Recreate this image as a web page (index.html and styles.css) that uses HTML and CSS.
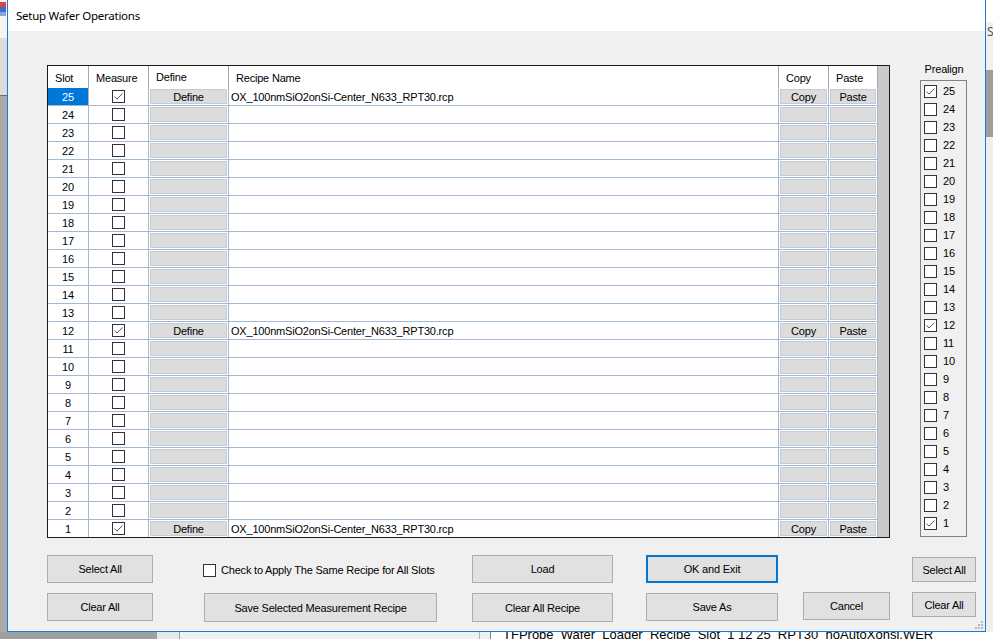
FILE: index.html
```html
<!DOCTYPE html>
<html>
<head>
<meta charset="utf-8">
<title>Setup Wafer Operations</title>
<link rel="stylesheet" href="styles.css">
</head>
<body>
<div class="backdrop">
  <div class="bg-left"><span class="bg-icon"></span></div>
  <div class="bg-right"><span class="bg-s">S</span></div>
  <div class="bg-bottom"><div class="bg-file">TFProbe_Wafer_Loader_Recipe_Slot_1 12 25_RPT30_noAutoXonsi.WER</div></div>
</div>
<div class="dialog">
  <div class="titlebar">Setup Wafer Operations</div>
  <div class="client">
    <div class="main">
      <div class="grid">
        <div class="row head"><div>Slot</div><div>Measure</div><div class="hdef">Define</div><div>Recipe Name</div><div>Copy</div><div>Paste</div></div>
        <div class="row"><div class="slot sel">25</div><div class="mid"><span class="cb"><svg viewBox="0 0 11 11"><path d="M1.5 5.5 L4 8 L9.5 2.5"/></svg></span></div><div class="bc"><span class="gbtn">Define</span></div><div class="name">OX_100nmSiO2onSi-Center_N633_RPT30.rcp</div><div class="bc"><span class="gbtn">Copy</span></div><div class="bc"><span class="gbtn">Paste</span></div></div>
        <div class="row"><div class="slot">24</div><div class="mid"><span class="cb"></span></div><div class="bc"><span class="gbtn"></span></div><div class="name"></div><div class="bc"><span class="gbtn"></span></div><div class="bc"><span class="gbtn"></span></div></div>
        <div class="row"><div class="slot">23</div><div class="mid"><span class="cb"></span></div><div class="bc"><span class="gbtn"></span></div><div class="name"></div><div class="bc"><span class="gbtn"></span></div><div class="bc"><span class="gbtn"></span></div></div>
        <div class="row"><div class="slot">22</div><div class="mid"><span class="cb"></span></div><div class="bc"><span class="gbtn"></span></div><div class="name"></div><div class="bc"><span class="gbtn"></span></div><div class="bc"><span class="gbtn"></span></div></div>
        <div class="row"><div class="slot">21</div><div class="mid"><span class="cb"></span></div><div class="bc"><span class="gbtn"></span></div><div class="name"></div><div class="bc"><span class="gbtn"></span></div><div class="bc"><span class="gbtn"></span></div></div>
        <div class="row"><div class="slot">20</div><div class="mid"><span class="cb"></span></div><div class="bc"><span class="gbtn"></span></div><div class="name"></div><div class="bc"><span class="gbtn"></span></div><div class="bc"><span class="gbtn"></span></div></div>
        <div class="row"><div class="slot">19</div><div class="mid"><span class="cb"></span></div><div class="bc"><span class="gbtn"></span></div><div class="name"></div><div class="bc"><span class="gbtn"></span></div><div class="bc"><span class="gbtn"></span></div></div>
        <div class="row"><div class="slot">18</div><div class="mid"><span class="cb"></span></div><div class="bc"><span class="gbtn"></span></div><div class="name"></div><div class="bc"><span class="gbtn"></span></div><div class="bc"><span class="gbtn"></span></div></div>
        <div class="row"><div class="slot">17</div><div class="mid"><span class="cb"></span></div><div class="bc"><span class="gbtn"></span></div><div class="name"></div><div class="bc"><span class="gbtn"></span></div><div class="bc"><span class="gbtn"></span></div></div>
        <div class="row"><div class="slot">16</div><div class="mid"><span class="cb"></span></div><div class="bc"><span class="gbtn"></span></div><div class="name"></div><div class="bc"><span class="gbtn"></span></div><div class="bc"><span class="gbtn"></span></div></div>
        <div class="row"><div class="slot">15</div><div class="mid"><span class="cb"></span></div><div class="bc"><span class="gbtn"></span></div><div class="name"></div><div class="bc"><span class="gbtn"></span></div><div class="bc"><span class="gbtn"></span></div></div>
        <div class="row"><div class="slot">14</div><div class="mid"><span class="cb"></span></div><div class="bc"><span class="gbtn"></span></div><div class="name"></div><div class="bc"><span class="gbtn"></span></div><div class="bc"><span class="gbtn"></span></div></div>
        <div class="row"><div class="slot">13</div><div class="mid"><span class="cb"></span></div><div class="bc"><span class="gbtn"></span></div><div class="name"></div><div class="bc"><span class="gbtn"></span></div><div class="bc"><span class="gbtn"></span></div></div>
        <div class="row"><div class="slot">12</div><div class="mid"><span class="cb"><svg viewBox="0 0 11 11"><path d="M1.5 5.5 L4 8 L9.5 2.5"/></svg></span></div><div class="bc"><span class="gbtn">Define</span></div><div class="name">OX_100nmSiO2onSi-Center_N633_RPT30.rcp</div><div class="bc"><span class="gbtn">Copy</span></div><div class="bc"><span class="gbtn">Paste</span></div></div>
        <div class="row"><div class="slot">11</div><div class="mid"><span class="cb"></span></div><div class="bc"><span class="gbtn"></span></div><div class="name"></div><div class="bc"><span class="gbtn"></span></div><div class="bc"><span class="gbtn"></span></div></div>
        <div class="row"><div class="slot">10</div><div class="mid"><span class="cb"></span></div><div class="bc"><span class="gbtn"></span></div><div class="name"></div><div class="bc"><span class="gbtn"></span></div><div class="bc"><span class="gbtn"></span></div></div>
        <div class="row"><div class="slot">9</div><div class="mid"><span class="cb"></span></div><div class="bc"><span class="gbtn"></span></div><div class="name"></div><div class="bc"><span class="gbtn"></span></div><div class="bc"><span class="gbtn"></span></div></div>
        <div class="row"><div class="slot">8</div><div class="mid"><span class="cb"></span></div><div class="bc"><span class="gbtn"></span></div><div class="name"></div><div class="bc"><span class="gbtn"></span></div><div class="bc"><span class="gbtn"></span></div></div>
        <div class="row"><div class="slot">7</div><div class="mid"><span class="cb"></span></div><div class="bc"><span class="gbtn"></span></div><div class="name"></div><div class="bc"><span class="gbtn"></span></div><div class="bc"><span class="gbtn"></span></div></div>
        <div class="row"><div class="slot">6</div><div class="mid"><span class="cb"></span></div><div class="bc"><span class="gbtn"></span></div><div class="name"></div><div class="bc"><span class="gbtn"></span></div><div class="bc"><span class="gbtn"></span></div></div>
        <div class="row"><div class="slot">5</div><div class="mid"><span class="cb"></span></div><div class="bc"><span class="gbtn"></span></div><div class="name"></div><div class="bc"><span class="gbtn"></span></div><div class="bc"><span class="gbtn"></span></div></div>
        <div class="row"><div class="slot">4</div><div class="mid"><span class="cb"></span></div><div class="bc"><span class="gbtn"></span></div><div class="name"></div><div class="bc"><span class="gbtn"></span></div><div class="bc"><span class="gbtn"></span></div></div>
        <div class="row"><div class="slot">3</div><div class="mid"><span class="cb"></span></div><div class="bc"><span class="gbtn"></span></div><div class="name"></div><div class="bc"><span class="gbtn"></span></div><div class="bc"><span class="gbtn"></span></div></div>
        <div class="row"><div class="slot">2</div><div class="mid"><span class="cb"></span></div><div class="bc"><span class="gbtn"></span></div><div class="name"></div><div class="bc"><span class="gbtn"></span></div><div class="bc"><span class="gbtn"></span></div></div>
        <div class="row"><div class="slot">1</div><div class="mid"><span class="cb"><svg viewBox="0 0 11 11"><path d="M1.5 5.5 L4 8 L9.5 2.5"/></svg></span></div><div class="bc"><span class="gbtn">Define</span></div><div class="name">OX_100nmSiO2onSi-Center_N633_RPT30.rcp</div><div class="bc"><span class="gbtn">Copy</span></div><div class="bc"><span class="gbtn">Paste</span></div></div>
      </div>
      <div class="actions">
        <div class="col c1">
          <span class="btn">Select All</span>
          <span class="btn">Clear All</span>
        </div>
        <div class="col c2">
          <label class="check-row"><span class="cb"></span>Check to Apply The Same Recipe for All Slots</label>
          <span class="btn">Save Selected Measurement Recipe</span>
        </div>
        <div class="col c3">
          <span class="btn">Load</span>
          <span class="btn">Clear All Recipe</span>
        </div>
        <div class="col c4">
          <span class="btn default">OK and Exit</span>
          <span class="btn">Save As</span>
        </div>
        <div class="col c5">
          <span class="spacer"></span>
          <span class="btn">Cancel</span>
        </div>
      </div>
    </div>
    <div class="side">
      <div class="pre-label">Prealign</div>
      <div class="pre-box">
        <div class="pre-item"><span class="cb"><svg viewBox="0 0 11 11"><path d="M1.5 5.5 L4 8 L9.5 2.5"/></svg></span>25</div>
        <div class="pre-item"><span class="cb"></span>24</div>
        <div class="pre-item"><span class="cb"></span>23</div>
        <div class="pre-item"><span class="cb"></span>22</div>
        <div class="pre-item"><span class="cb"></span>21</div>
        <div class="pre-item"><span class="cb"></span>20</div>
        <div class="pre-item"><span class="cb"></span>19</div>
        <div class="pre-item"><span class="cb"></span>18</div>
        <div class="pre-item"><span class="cb"></span>17</div>
        <div class="pre-item"><span class="cb"></span>16</div>
        <div class="pre-item"><span class="cb"></span>15</div>
        <div class="pre-item"><span class="cb"></span>14</div>
        <div class="pre-item"><span class="cb"></span>13</div>
        <div class="pre-item"><span class="cb"><svg viewBox="0 0 11 11"><path d="M1.5 5.5 L4 8 L9.5 2.5"/></svg></span>12</div>
        <div class="pre-item"><span class="cb"></span>11</div>
        <div class="pre-item"><span class="cb"></span>10</div>
        <div class="pre-item"><span class="cb"></span>9</div>
        <div class="pre-item"><span class="cb"></span>8</div>
        <div class="pre-item"><span class="cb"></span>7</div>
        <div class="pre-item"><span class="cb"></span>6</div>
        <div class="pre-item"><span class="cb"></span>5</div>
        <div class="pre-item"><span class="cb"></span>4</div>
        <div class="pre-item"><span class="cb"></span>3</div>
        <div class="pre-item"><span class="cb"></span>2</div>
        <div class="pre-item"><span class="cb"><svg viewBox="0 0 11 11"><path d="M1.5 5.5 L4 8 L9.5 2.5"/></svg></span>1</div>
      </div>
      <span class="btn side-sel">Select All</span>
      <span class="btn side-clr">Clear All</span>
    </div>
  </div>
  <span class="grip"><svg viewBox="0 0 9 9"><rect x="7" y="1" width="2" height="2"/><rect x="4" y="4" width="2" height="2"/><rect x="7" y="4" width="2" height="2"/><rect x="1" y="7" width="2" height="2"/><rect x="4" y="7" width="2" height="2"/><rect x="7" y="7" width="2" height="2"/></svg></span>
</div>
</body>
</html>
```

FILE: styles.css
```css
* { box-sizing: border-box; }
html, body { margin: 0; padding: 0; }
body {
  width: 993px;
  height: 639px;
  overflow: hidden;
  position: relative;
  background: #f0f0f0;
  font-family: "Liberation Sans", Arial, sans-serif;
  font-size: 11px;
  letter-spacing: -0.2px;
  color: #000;
}

/* windows behind the dialog */
.backdrop { position: absolute; left: 0; top: 0; width: 993px; height: 639px; }
.bg-left {
  position: absolute; left: 0; top: 0; width: 7px; height: 639px;
  background: linear-gradient(to bottom, #f4f4f4 0, #f4f4f4 38px, #dcdcdc 38px, #dcdcdc 95px, #6e6e6e 95px, #6e6e6e 96px, #a9a9a9 96px);
}
.bg-icon {
  display: block; width: 6px; height: 14px; margin-top: 2px;
  background: linear-gradient(to bottom, #d04848 0, #d04848 5px, #3a6fd0 5px, #3a6fd0 10px, #8aa4d8 10px);
}
.bg-right {
  position: absolute; left: 986px; top: 0; width: 7px; height: 639px; overflow: hidden;
  background: linear-gradient(to bottom, #fff 0, #fff 22px, #f0f0f0 22px, #f0f0f0 70px, #9e9e9e 70px, #9e9e9e 137px, #efefef 137px);
}
.bg-s { display: block; margin: 23px 0 0 1px; font-family: "Noto Sans", sans-serif; font-size: 12px; color: #555; }
.bg-bottom {
  position: absolute; left: 0; top: 632px; width: 993px; height: 7px; overflow: hidden;
  background: linear-gradient(to right, #a0a0a0 0, #a0a0a0 157px, #e8e8e8 157px, #e8e8e8 179px, #a0a0a0 179px, #a0a0a0 180px, #f0f0f0 180px, #f0f0f0 479px, #b0b0b0 479px, #b0b0b0 480px, #f0f0f0 480px, #f0f0f0 490px, #808080 490px, #808080 491px, #fff 491px);
}
.bg-file { margin: -5px 0 0 503px; font-size: 13px; line-height: 15px; white-space: nowrap; letter-spacing: 0; }

/* dialog */
.dialog {
  position: absolute; left: 7px; top: -1px; width: 979px; height: 633px;
  border: 1px solid #1c7ad2;
  background: #f0f0f0;
  display: flex; flex-direction: column;
}
.titlebar {
  height: 31px; flex: none; background: #fff;
  padding-left: 8px;
  display: flex; align-items: center;
  font-family: "Segoe UI", "Noto Sans", sans-serif; font-size: 11.5px; letter-spacing: -0.25px;
}
.client { flex: 1; display: flex; align-items: flex-start; }
.main { margin: 34px 0 0 39px; width: 843px; }

.grid { height: 473px; border: 1px solid #1a1a1a; background: #c9c9c9; }
.row {
  display: grid;
  grid-template-columns: 41px 60px 80px 550px 50px 49px;
  width: 830px; height: 18px; background: #fff;
}
.row > div {
  border-right: 1px solid #a3b8d2;
  border-bottom: 1px solid #a3b8d2;
  display: flex; align-items: center;
  overflow: hidden;
}
.row:last-child { height: 17px; }
.row:last-child > div { border-bottom: 0; }
.head { height: 22px; }
.head > div { border-right-color: #a8a8a8; border-bottom: 0; padding: 1px 0 0 7px; }
.head > .hdef { padding-top: 0; padding-bottom: 1px; }
.slot { justify-content: center; }
.sel { background: #0078d7; color: #fff; }
.mid { justify-content: center; padding-right: 1px; }
.name { padding-left: 2px; }
.bc { padding: 1px; }
.gbtn {
  display: flex; align-items: center; justify-content: center;
  width: 100%; height: 100%;
  background: #dcdcdc; border: 1px solid #c4ccd6;
  padding-top: 1px; overflow: hidden;
}

.cb {
  display: inline-flex; align-items: center; justify-content: center;
  width: 13px; height: 13px; flex: none;
  border: 1px solid #333; background: #fff;
}
.cb svg { width: 11px; height: 11px; fill: none; stroke: #5a5a5a; stroke-width: 1; }

/* bottom buttons */
.actions { display: flex; margin-top: 17px; }
.col { display: flex; flex-direction: column; gap: 10px; }
.c1 { width: 106px; }
.c2 { width: 234px; margin-left: 50px; }
.c3 { width: 141px; margin-left: 35px; }
.c4 { width: 132px; margin-left: 33px; }
.c5 { width: 87px; margin-left: 25px; }
.btn {
  display: flex; align-items: center; justify-content: center;
  height: 28px; background: #e1e1e1; border: 1px solid #adadad;
  white-space: nowrap;
}
.btn.default { border: 2px solid #0078d7; }
.check-row { height: 28px; display: flex; align-items: center; padding-top: 2px; }
.check-row .cb { margin-right: 5px; }
.c2 .btn { margin-left: 1px; height: 29px; }
.c3 .btn:last-child { height: 29px; }
.spacer { height: 27px; }

/* prealign */
.side { margin: 32px 0 0 22px; width: 64px; display: flex; flex-direction: column; }
.pre-label { height: 13px; line-height: 13px; text-align: center; }
.pre-box {
  margin: 4px 0 0 8px; width: 47px; height: 457px;
  border: 1px solid #828282; padding: 1px 0 0 3px;
}
.pre-item { height: 18px; display: flex; align-items: center; }
.pre-item .cb { margin-right: 6px; }
.side-sel { height: 25px; margin-top: 20px; }
.side-clr { height: 25px; margin-top: 10px; }

.grip { position: absolute; right: 2px; bottom: 2px; width: 9px; height: 9px; }
.grip svg { display: block; width: 9px; height: 9px; fill: #b9b9b9; }
```
